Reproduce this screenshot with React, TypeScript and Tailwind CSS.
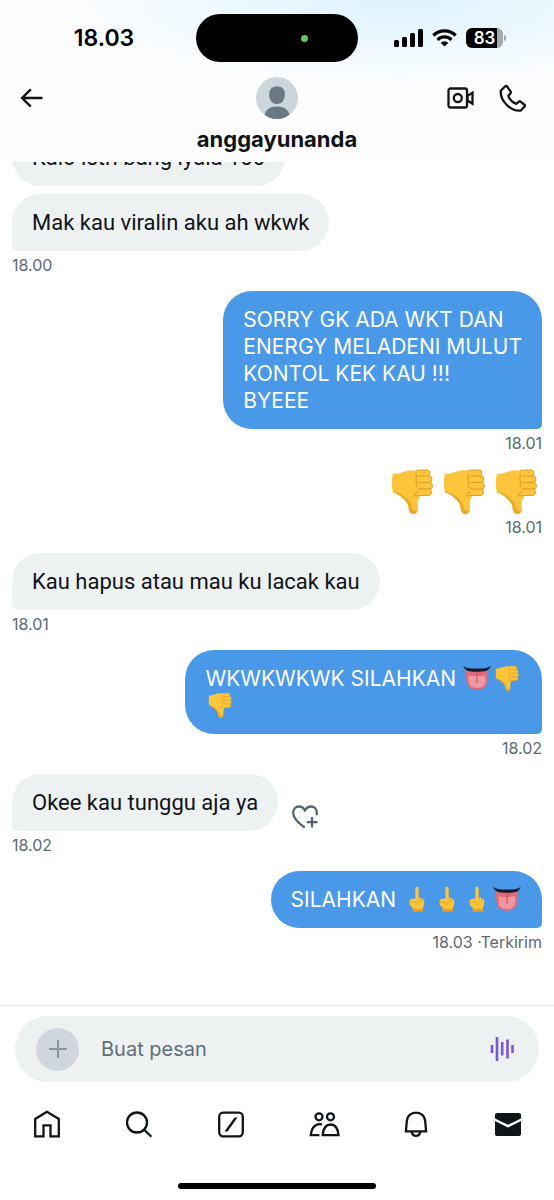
import { useState, type ReactNode } from "react";
import clsx from "clsx";

type EmojiName = "thumbsDown" | "tongue" | "finger";

type Message = {
    id: number;
    from: "me" | "them";
    lines: ReactNode[];
    time?: string;
    bare?: boolean;
    canReact?: boolean;
};

const emojiLabels: Record<EmojiName, string> = {
    thumbsDown: "👎",
    tongue: "👅",
    finger: "🖕",
};

function EmojiArt({ name }: { name: EmojiName }) {
    if (name === "thumbsDown") {
        return (
            <>
                <path
                    d="M7 7.500C12 9 18 5 24 4.200L34 5l3 20-3 6c-2 3-2.600 5-2 9 .5 4-1 8-4.500 8-3.500 0-4.500-3-5-7-.6-4-3-6-5.500-8.500C14 30 11 27 7 26.500 5.500 21 5.500 13 7 7.500z"
                    fill="#fcc53b"
                />
                <path d="M7 26.500c4 .5 7 3.500 10 6 2.500 2.500 4.900 4.500 5.500 8.500.5 4 1.500 7 5 7 2 0 3.500-1.500 4.200-3.500-4 1.500-6-1-6.700-5C24 34 17 28 7 25z" fill="#eba828" />
                <rect x="29" y="4" width="15" height="6.500" rx="3.200" fill="#fcc53b" stroke="#e09d24" strokeWidth="1" />
                <rect x="29" y="10" width="17" height="6.800" rx="3.400" fill="#fcc53b" stroke="#e09d24" strokeWidth="1" />
                <rect x="29" y="16.500" width="17.500" height="6.800" rx="3.400" fill="#fcc53b" stroke="#e09d24" strokeWidth="1" />
                <rect x="28" y="23" width="17.500" height="6.500" rx="3.200" fill="#fcc53b" stroke="#e09d24" strokeWidth="1" />
                <path d="M20 7l9-2.200 3 .6-1 23-4 3-7-6z" fill="#fcc53b" />
                <path d="M30.500 8c-1.200 5-.5 9 .3 13M28 30c1-1.800 2-3 3.500-4" fill="none" stroke="#e2a026" strokeWidth="1.200" strokeLinecap="round" />
            </>
        );
    }
    if (name === "tongue") {
        return (
            <>
                <path d="M7 10c10 3 28 3 38 0 1 9 1 20-2 27-3 6-10 9-17 9S12 43 9 37C6 30 6 19 7 10z" fill="#e06a7c" />
                <path d="M11 20c8 2 22 2 30 0 0 7 .5 13-2 17.500-2.500 3-7 5.500-13 5.500s-10.500-2.500-13-5.500C10.500 33 11 27 11 20z" fill="#ef97a1" />
                <path d="M26 16v17" stroke="#c94f68" strokeWidth="2" strokeLinecap="round" />
                <path d="M1 2.500c4 4 11 5.500 25 5.500s21-1.500 25-5.500c-2 5-5 8-8 9.500-9 2.500-25 2.500-34 0-3-1.500-6-4.500-8-9.500z" fill="#1b1b26" />
            </>
        );
    }
    return (
        <>
            <path
                d="M23 25V6c0-1.800 1.300-3 3-3s3 1.200 3 3v17c3-.6 5 .2 5.500 1.500 2.500-.2 4 1.200 4.300 3.500.6 5 .2 9-2.300 12v7h-18v-7c-4-1.500-6-5-6-9 0-3 1-5.500 4-6 2.500-.4 5-.2 6.500 0z"
                fill="#fcc53b"
            />
            <path d="M18.500 41c5 2 13 2 18 0v6h-18z" fill="#e9a228" />
            <path d="M14 31c5-1 9-1 12 1s2 4-2 4M29.500 24v7M34.500 25v6" fill="none" stroke="#e2a026" strokeWidth="1.400" strokeLinecap="round" />
        </>
    );
}

function Emoji({ name, large = false }: { name: EmojiName; large?: boolean }) {
    return (
        <svg
            role="img"
            aria-label={emojiLabels[name]}
            viewBox="0 0 52 50"
            className={clsx("inline-block shrink-0", large ? "h-[50px] w-[52px]" : "-mt-1.5 -mb-0.5 h-7 w-[30px] align-middle")}
        >
            <EmojiArt name={name} />
        </svg>
    );
}

const messages: Message[] = [
    { id: 1, from: "them", lines: ["Kalo istri bang iyala 100"] },
    { id: 2, from: "them", lines: ["Mak kau viralin aku ah wkwk"], time: "18.00" },
    {
        id: 3,
        from: "me",
        lines: ["SORRY GK ADA WKT DAN", "ENERGY MELADENI MULUT", "KONTOL KEK KAU !!!", "BYEEE"],
        time: "18.01",
    },
    {
        id: 4,
        from: "me",
        bare: true,
        lines: [
            <>
                <Emoji name="thumbsDown" large />
                <Emoji name="thumbsDown" large />
                <Emoji name="thumbsDown" large />
            </>,
        ],
        time: "18.01",
    },
    { id: 5, from: "them", lines: ["Kau hapus atau mau ku lacak kau"], time: "18.01" },
    {
        id: 6,
        from: "me",
        lines: [
            <>
                WKWKWKWK SILAHKAN <Emoji name="tongue" />
                <Emoji name="thumbsDown" />
            </>,
            <Emoji name="thumbsDown" />,
        ],
        time: "18.02",
    },
    { id: 7, from: "them", lines: ["Okee kau tunggu aja ya"], time: "18.02", canReact: true },
    {
        id: 8,
        from: "me",
        lines: [
            <>
                SILAHKAN <Emoji name="finger" />
                <Emoji name="finger" />
                <Emoji name="finger" />
                <Emoji name="tongue" />
            </>,
        ],
        time: "18.03 ·Terkirim",
    },
];

function StatusBar() {
    return (
        <div className="grid h-[76px] grid-cols-[1fr_162px_1fr] items-center">
            <span className="pl-3 text-center text-[23px] leading-7 font-semibold text-black">18.03</span>

            {/* Dynamic island with the camera-in-use dot */}
            <div className="flex h-12 items-center justify-end rounded-full bg-black pr-[50px]">
                <span className="size-[7px] rounded-full bg-[#62c466]" />
            </div>

            <div className="flex items-center justify-center gap-[9px] pr-3">
                <svg viewBox="0 0 29 18" className="h-[18px] w-[29px]" fill="#000">
                    <rect x="0" y="11" width="5" height="7" rx="1.500" />
                    <rect x="8" y="8" width="5" height="10" rx="1.500" />
                    <rect x="16" y="4" width="5" height="14" rx="1.500" />
                    <rect x="24" y="0" width="5" height="18" rx="1.500" />
                </svg>
                <svg viewBox="0 0 25 18" className="h-[18px] w-[25px]" fill="none" stroke="#000" strokeWidth="3.200">
                    <path d="M1.400 6.500C7.500.4 17.500.4 23.600 6.500" />
                    <path d="M5.500 10.800c4-3.800 10-3.800 14 0" />
                    <path d="M12.500 17.600l-3.700-3.700c2-1.900 5.400-1.900 7.400 0z" fill="#000" stroke="none" />
                </svg>
                <div className="flex items-center gap-px">
                    <div className="flex h-5 w-[37px] items-center overflow-hidden rounded-[6px] bg-linear-to-r from-black from-83% to-[#a3a9ae] to-83%">
                        <span className="w-full text-center text-[17px] leading-5 font-semibold text-white">83</span>
                    </div>
                    <span className="h-[6px] w-[2px] rounded-r-full bg-[#a3a9ae]" />
                </div>
            </div>
        </div>
    );
}

function ChatHeader() {
    return (
        <div className="grid grid-cols-[1fr_auto_1fr] items-start px-5 pt-px pb-[9px] text-[#0f1419]">
            <div className="flex h-[42px] items-center">
                <button type="button" aria-label="Kembali">
                    <svg viewBox="0 0 24 20" className="h-5 w-6" fill="none" stroke="currentColor" strokeWidth="2.400">
                        <path d="M22.500 10H2.500M10.800 1.300L2.100 10l8.700 8.700" />
                    </svg>
                </button>
            </div>

            <div className="flex flex-col items-center">
                <svg viewBox="0 0 42 42" className="size-[42px]">
                    <defs>
                        <clipPath id="avatar">
                            <circle cx="21" cy="21" r="21" />
                        </clipPath>
                    </defs>
                    <g clipPath="url(#avatar)">
                        <rect width="42" height="42" fill="#ccd5dc" />
                        <path d="M21 9.500c5.200 0 7.800 2.500 7.800 8 0 5.500-2.800 9.500-7.800 9.500s-7.800-4-7.800-9.500c0-5.500 2.600-8 7.800-8z" fill="#6a7885" />
                        <path d="M8 42c0-8 4.500-12.500 13-12.500S34 34 34 42z" fill="#6a7885" />
                    </g>
                </svg>
                <h1 className="mt-[6px] text-[22px] leading-7 font-bold">anggayunanda</h1>
            </div>

            <div className="flex h-[42px] items-center justify-end gap-6 pr-2">
                <button type="button" aria-label="Panggilan video">
                    <svg viewBox="0 0 28 24" className="h-6 w-7" fill="none" stroke="currentColor" strokeWidth="2.300">
                        <rect x="2.500" y="2.500" width="18.500" height="19" rx="2" />
                        <circle cx="11.800" cy="12" r="4" />
                        <path d="M21.500 9.800l5-3v10.800l-5-3z" />
                    </svg>
                </button>
                <button type="button" aria-label="Panggilan suara">
                    <svg viewBox="0 0 28 28" className="size-7" fill="none" stroke="currentColor" strokeWidth="2.300" strokeLinejoin="round">
                        <path d="M7.300 2.200L2.900 6.500c-.6 4.300 1.300 9.900 5.700 14.300s9.900 6.400 14.200 5.700l4-4.200c.4-.4.4-.9 0-1.300l-4.300-3.400c-.5-.4-1-.4-1.500 0l-2.800 2.300c-4-1.500-6.500-4.100-7.900-8l2.400-2.800c.4-.5.4-1 0-1.500L9 2.300c-.5-.5-1.200-.6-1.700-.1z" />
                    </svg>
                </button>
            </div>
        </div>
    );
}

function MessageRow({ message }: { message: Message }) {
    const mine = message.from === "me";

    return (
        <li className={clsx("flex flex-col", mine ? "items-end" : "items-start", message.time ? "mb-4" : "mb-2")}>
            <div className="flex items-end gap-[13px]">
                {message.bare ? (
                    <div className="flex h-11 items-center">{message.lines}</div>
                ) : (
                    <div
                        className={clsx(
                            "rounded-[29px] px-5 py-[15px] leading-[27px] whitespace-nowrap",
                            mine
                                ? "rounded-br-[5px] bg-[#4a99e9] text-[21px] text-white"
                                : "bg-[#eef1f2] font-['Roboto',sans-serif] text-[22px] text-[#0f1419]",
                            !mine && message.time && "rounded-bl-[5px]"
                        )}
                    >
                        {message.lines.map((line, i) => (
                            <p key={i} className="h-[27px]">
                                {line}
                            </p>
                        ))}
                    </div>
                )}
                {message.canReact && (
                    <button type="button" aria-label="Beri reaksi" className="text-[#536471]">
                        <svg viewBox="0 0 28 28" className="size-7" fill="none" stroke="currentColor" strokeWidth="2.300">
                            <path d="M13.700 24.500C7 20 2.200 15.500 2.200 9.800c0-3.600 2.500-6.300 5.800-6.300 2.600 0 4.600 1.500 6 3.800 1.400-2.300 3.400-3.800 6-3.800 3.300 0 5.800 2.700 5.800 6.300 0 .8-.1 1.600-.4 2.400" />
                            <path d="M21 14v10.500M15.800 19.200h10.700" />
                        </svg>
                    </button>
                )}
            </div>
            {message.time && <span className="mt-1 text-base leading-5 text-[#5b6975]">{message.time}</span>}
        </li>
    );
}

function Composer() {
    const [draft, setDraft] = useState("");

    return (
        <form
            className="mx-[15px] mt-[10px] flex h-[66px] items-center rounded-full bg-[#eef1f2] px-[21px]"
            onSubmit={(e) => {
                e.preventDefault();
                setDraft("");
            }}
        >
            <button type="button" aria-label="Tambah lampiran" className="flex size-[43px] shrink-0 items-center justify-center rounded-full bg-[#cfd6dd]">
                <svg viewBox="0 0 18 18" className="size-[18px]" stroke="#8b939b" strokeWidth="2">
                    <path d="M9 0v18M0 9h18" />
                </svg>
            </button>
            <input
                type="text"
                aria-label="Buat pesan"
                placeholder="Buat pesan"
                value={draft}
                onChange={(e) => setDraft(e.target.value)}
                className="ml-[22px] min-w-0 flex-1 text-[20px] leading-7 text-[#0f1419] outline-none placeholder:text-[#5f6d79]"
            />
            <button type="button" aria-label="Rekam pesan suara">
                <svg viewBox="0 0 30 24" className="h-6 w-[30px]" stroke="#7856dc" strokeWidth="2.600">
                    <path d="M4 8v8M9 0v24M14.200 5v13.500M19.500 2.500v19M24.500 8v8" />
                </svg>
            </button>
        </form>
    );
}

const tabs = [
    {
        label: "Beranda",
        icon: <path d="M14 1.800L2.200 9v17.300h8.300v-11h7v11h8.300V9z" />,
    },
    {
        label: "Cari",
        icon: (
            <>
                <circle cx="12" cy="12.500" r="10" />
                <path d="M19 19.500l7.300 7.300" />
            </>
        ),
    },
    {
        label: "Grok",
        icon: (
            <>
                <rect x="2.200" y="2.700" width="23.600" height="23.600" rx="4" />
                <path d="M7.500 21.500h3L20.500 7.500h-3z" fill="currentColor" stroke="none" />
            </>
        ),
    },
    {
        label: "Komunitas",
        icon: (
            <>
                <circle cx="9" cy="6.800" r="3.500" />
                <circle cx="20.500" cy="6.800" r="3.500" />
                <path d="M12 14.300C6 13 1.700 16.800.8 25.100h8.600" />
                <path d="M12.700 25.100c.6-7 3.500-10.600 7.900-10.600s7.300 3.600 7.900 10.600z" />
            </>
        ),
    },
    {
        label: "Notifikasi",
        icon: (
            <>
                <path d="M14 2.600c-5 0-8.900 3.400-9.200 8.500L3.900 21.300h20.200l-.9-10.200c-.3-5.100-4.200-8.500-9.200-8.500z" />
                <path d="M9.500 21.500c.6 2.700 2.200 4.300 4.500 4.300s3.900-1.600 4.500-4.300" />
            </>
        ),
    },
    {
        label: "Pesan",
        icon: (
            <g fill="currentColor" stroke="none">
                <path d="M1 8.500V5c0-1.300.8-2 2-2h22c1.200 0 2 .7 2 2v3.500L14 14.800z" />
                <path d="M1 11l13 6.500L27 11v13c0 1.300-.8 2-2 2H3c-1.200 0-2-.7-2-2z" />
            </g>
        ),
    },
];

function TabBar() {
    return (
        <nav className="grid h-[84px] grid-cols-6 pl-px">
            {tabs.map((tab) => (
                <a key={tab.label} href="#" aria-label={tab.label} className="flex items-center justify-center text-[#0f1419]">
                    <svg viewBox="0 0 28 28" className="size-7 overflow-visible" fill="none" stroke="currentColor" strokeWidth="2.300">
                        {tab.icon}
                    </svg>
                </a>
            ))}
        </nav>
    );
}

export default function App() {
    return (
        <div className="flex h-screen flex-col overflow-hidden bg-white font-['Inter',sans-serif]">
            <header className="shrink-0 bg-[radial-gradient(ellipse_62%_55%_at_72%_0%,#def3fe,#e9f7fe_40%,#fdfdfe)]">
                <StatusBar />
                <ChatHeader />
            </header>

            <main className="flex min-h-0 flex-1 flex-col justify-end overflow-hidden px-3 pb-[37px]">
                <ul>
                    {messages.map((message) => (
                        <MessageRow key={message.id} message={message} />
                    ))}
                </ul>
            </main>

            <footer className="shrink-0 border-t border-[#e6e9eb]">
                <Composer />
                <TabBar />
                {/* Home indicator */}
                <div className="flex h-[34px] items-start justify-center pt-[17px]">
                    <div className="h-[6px] w-[198px] rounded-full bg-black" />
                </div>
            </footer>
        </div>
    );
}
